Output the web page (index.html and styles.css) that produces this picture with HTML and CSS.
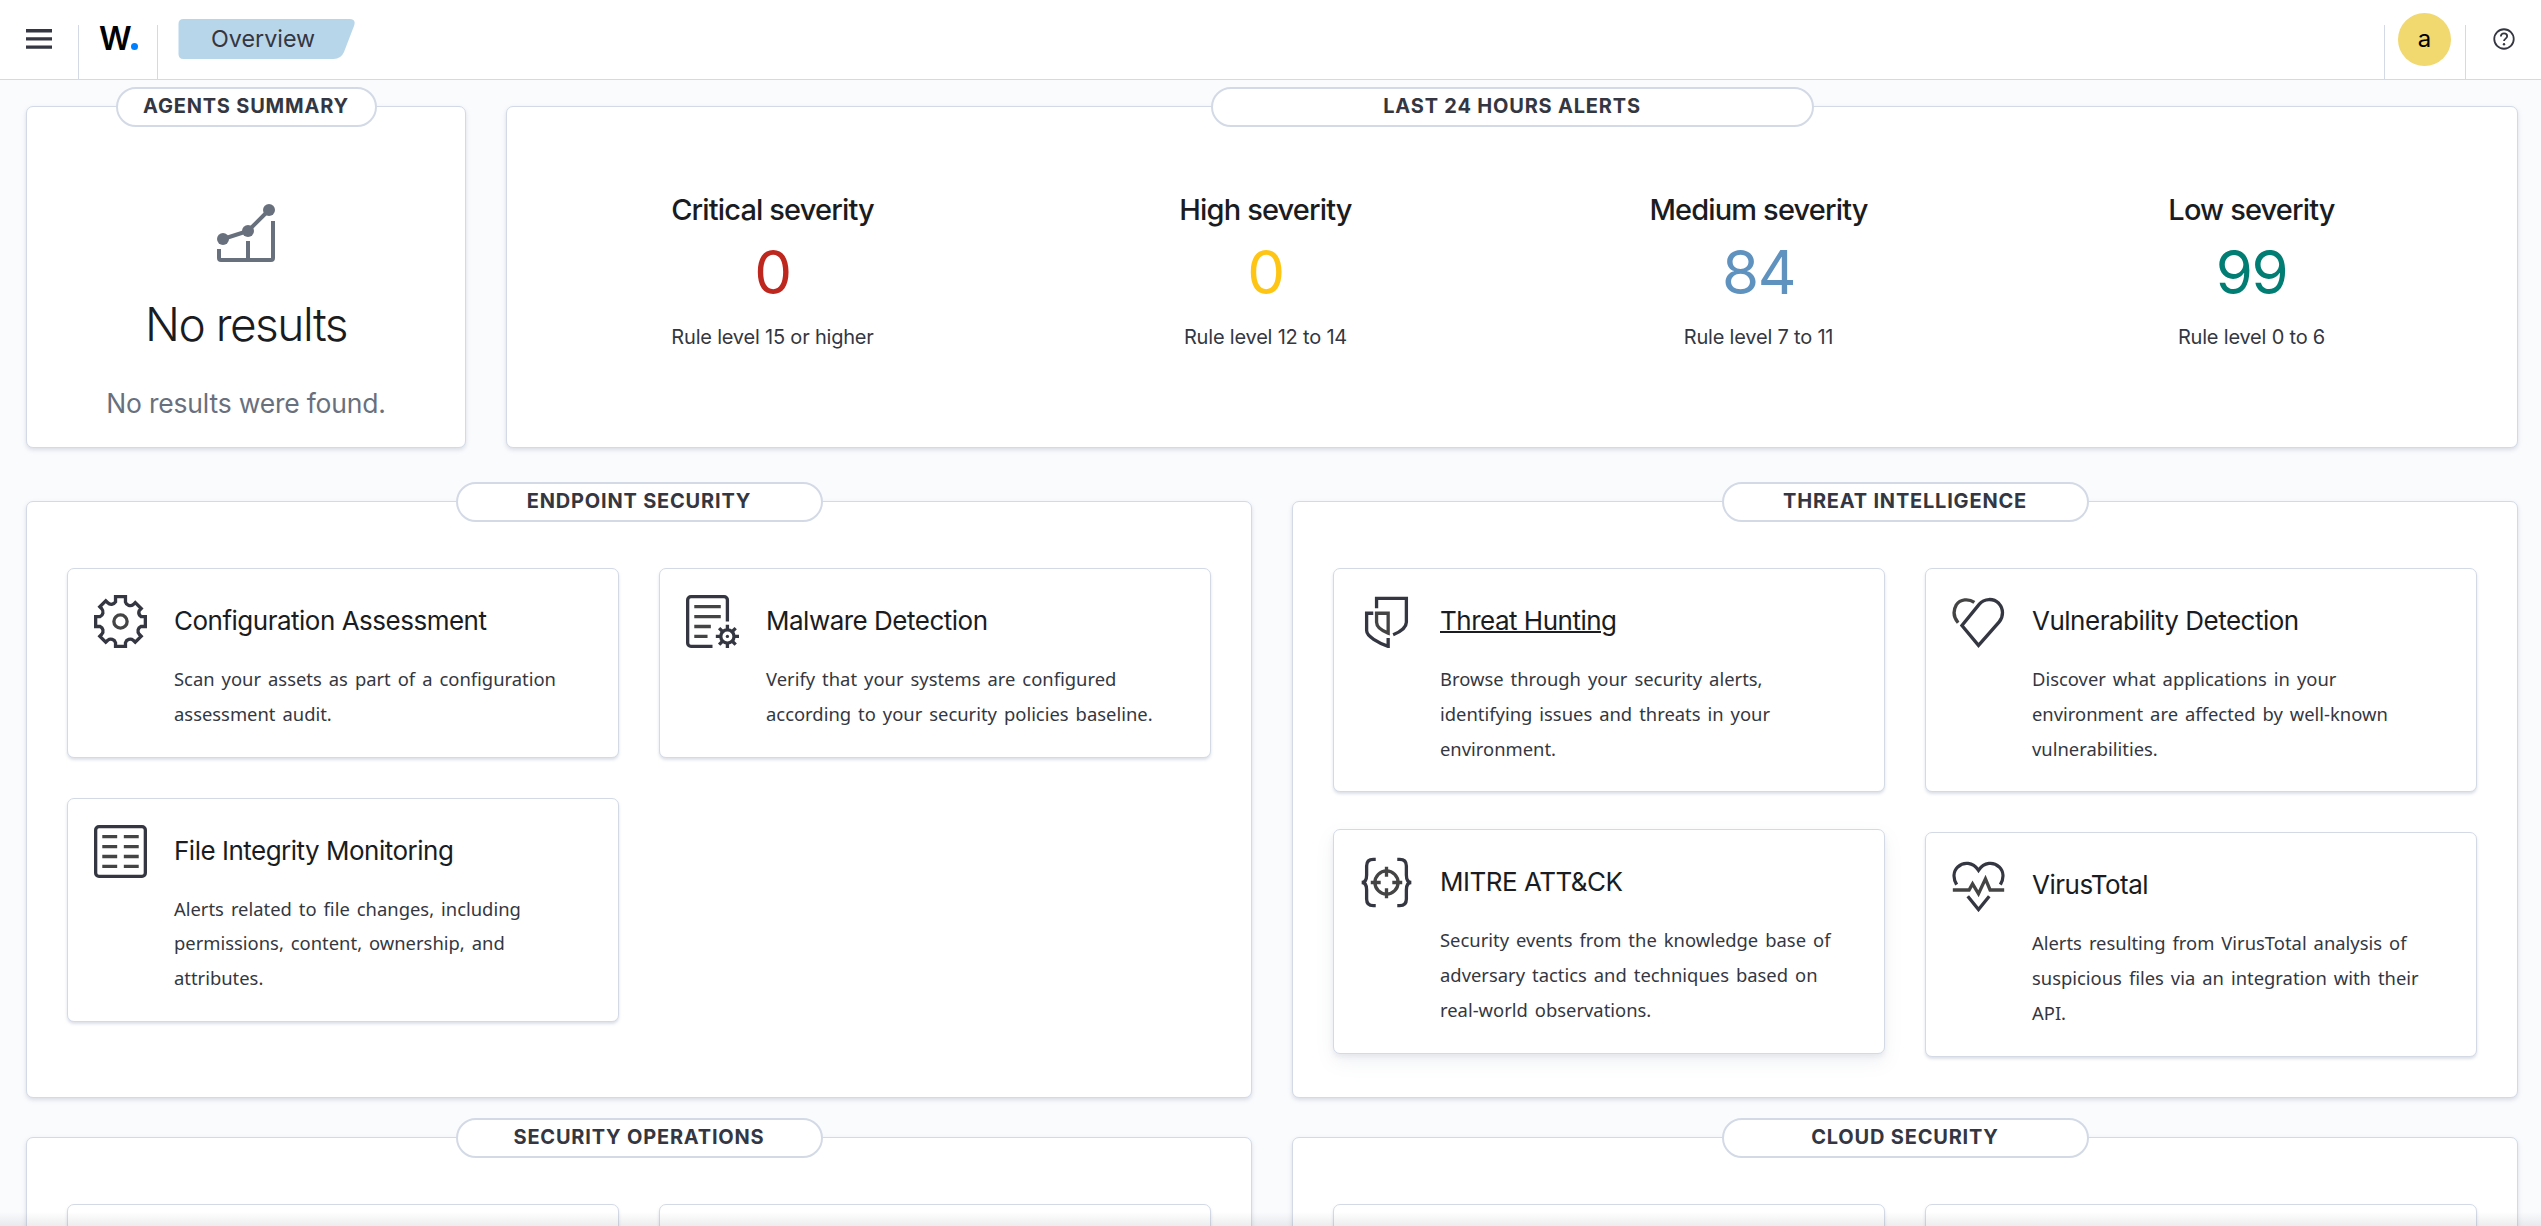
FILE: index.html
```html
<!DOCTYPE html>
<html lang="en">
<head>
    <meta charset="UTF-8">
    <meta name="viewport" content="width=device-width, initial-scale=1.0">
    <title>Wazuh - Overview</title>
    <link rel="stylesheet" href="styles.css">
</head>
<body>
    <header class="header">
        <div class="header-item menu-item">
            <svg class="menu-icon" viewBox="0 0 26 20"><path d="M0 0h26v3.4H0zM0 8.2h26v3.4H0zM0 16.4h26v3.4H0z"/></svg>
        </div>
        <div class="header-item logo-item">
            <span class="logo">W</span><span class="logo-dot"></span>
        </div>
        <nav class="breadcrumb">
            <svg class="breadcrumb-shape" viewBox="0 0 176 40"><path d="M5 0H171Q178 0 175.500 7L165.500 33Q162.500 40 155 40H5Q0 40 0 35V5Q0 0 5 0Z"/></svg>
            <span class="breadcrumb-text">Overview</span>
        </nav>
        <div class="header-right">
            <div class="header-item avatar-item"><span class="avatar">a</span></div>
            <div class="header-item help-item">
                <svg class="help-icon" viewBox="0 0 16 16"><path d="M8 14.500A6.500 6.500 0 1 0 8 1.500a6.500 6.500 0 0 0 0 13Z M5.900 6.300C5.900 5 6.800 4.300 8 4.300s2.100.8 2.100 1.900c0 1.500-2.100 1.600-2.100 3.200"/><circle cx="8" cy="11.500" r=".8"/></svg>
            </div>
        </div>
    </header>

    <main class="page">
        <section class="row row-summary">
            <div class="panel panel-agents">
                <h2 class="pill pill-agents">AGENTS SUMMARY</h2>
                <svg class="chart-icon" viewBox="0 0 58 58"><path class="line" d="M6 35L31 27L52 6M2 45v9q0 2 2 2h50q2 0 2-2V17M31 37v19"/><circle cx="6" cy="35" r="6"/><circle cx="31" cy="27" r="6"/><circle cx="52" cy="6" r="6"/></svg>
                <div class="empty-title">No results</div>
                <div class="empty-text">No results were found.</div>
            </div>
            <div class="panel panel-alerts">
                <h2 class="pill pill-alerts">LAST 24 HOURS ALERTS</h2>
                <div class="stat">
                    <div class="stat-title">Critical severity</div>
                    <div class="stat-value critical">0</div>
                    <div class="stat-text">Rule level 15 or higher</div>
                </div>
                <div class="stat">
                    <div class="stat-title">High severity</div>
                    <div class="stat-value high">0</div>
                    <div class="stat-text">Rule level 12 to 14</div>
                </div>
                <div class="stat">
                    <div class="stat-title">Medium severity</div>
                    <div class="stat-value medium">84</div>
                    <div class="stat-text">Rule level 7 to 11</div>
                </div>
                <div class="stat">
                    <div class="stat-title">Low severity</div>
                    <div class="stat-value low">99</div>
                    <div class="stat-text">Rule level 0 to 6</div>
                </div>
            </div>
        </section>

        <section class="row row-modules">
            <div class="panel panel-modules">
                <h2 class="pill">ENDPOINT SECURITY</h2>
                <div class="cards">
                    <article class="card">
                        <svg class="card-icon" viewBox="0 0 32 32"><path d="M13 1h6v3.200a3 3 0 0 0 4.700 1.600l1.200-1.200 3.600 3.600-1.200 1.200A3 3 0 0 0 28.300 13H31v6h-2.700a3 3 0 0 0-1 4.700l1.200 1.200-3.600 3.600-1.200-1.200A3 3 0 0 0 19 28.800V31h-6v-2.200a3 3 0 0 0-4.700-1.500l-1.200 1.200-3.600-3.600 1.200-1.200a3 3 0 0 0-1-4.700H1v-6h2.700a3 3 0 0 0 1-4.700L3.500 7.100l3.600-3.600 1.200 1.200A3 3 0 0 0 13 4.200Z"/><circle class="accent" cx="16" cy="16" r="4"/></svg>
                        <div>
                            <h3 class="card-title">Configuration Assessment</h3>
                            <p class="card-text">Scan your assets as part of a configuration<br>assessment audit.</p>
                        </div>
                    </article>
                    <article class="card">
                        <svg class="card-icon" viewBox="0 0 32 32"><path d="M16 31H3a2 2 0 0 1-2-2V3a2 2 0 0 1 2-2h20a2 2 0 0 1 2 2v13"/><path class="accent" d="M5 7h16M5 13h16M5 19h10M5 25h8"/><circle cx="25" cy="25" r="4"/><circle class="dot" cx="25" cy="25" r="1"/><path d="M25 18v3M25 29v3M18 25h3M29 25h3M20 20l2.200 2.200M27.800 27.800L30 30M30 20l-2.200 2.200M22.200 27.800L20 30"/></svg>
                        <div>
                            <h3 class="card-title">Malware Detection</h3>
                            <p class="card-text">Verify that your systems are configured<br>according to your security policies baseline.</p>
                        </div>
                    </article>
                    <article class="card">
                        <svg class="card-icon" viewBox="0 0 32 32"><rect x="1" y="1" width="30" height="30" rx="2"/><path class="accent" d="M5 7h9M18 7h9M5 13h9M18 13h9M5 19h9M18 19h9M5 25h9M18 25h9"/></svg>
                        <div>
                            <h3 class="card-title">File Integrity Monitoring</h3>
                            <p class="card-text">Alerts related to file changes, including<br>permissions, content, ownership, and<br>attributes.</p>
                        </div>
                    </article>
                </div>
            </div>
            <div class="panel panel-modules">
                <h2 class="pill">THREAT INTELLIGENCE</h2>
                <div class="cards">
                    <article class="card">
                        <svg class="card-icon" viewBox="0 0 32 32"><path d="M10 8V2h18v14.500c0 2.500-3 5.500-8 7.500M8 11H4v10.500C4 25 11 29 17 31v-5"/><path class="accent" d="M10 11h7v12c-4-1.500-7-4-7-6.500Z"/></svg>
                        <div>
                            <h3 class="card-title hovered">Threat Hunting</h3>
                            <p class="card-text">Browse through your security alerts,<br>identifying issues and threats in your<br>environment.</p>
                        </div>
                    </article>
                    <article class="card">
                        <svg class="card-icon" viewBox="0 0 32 32"><path class="accent" d="M13.500 4.500C10 2 5 2.500 2.600 6 .6 9.500 1 13.500 3.700 16.800"/><path d="M16 30.400L6 18.400 16.500 5.500C19.500 2 25 1.800 28.200 5c3 3.200 3 8 .3 11.200Z"/></svg>
                        <div>
                            <h3 class="card-title">Vulnerability Detection</h3>
                            <p class="card-text">Discover what applications in your<br>environment are affected by well-known<br>vulnerabilities.</p>
                        </div>
                    </article>
                    <article class="card raised">
                        <svg class="card-icon" viewBox="0 0 32 32"><path d="M9.500 2H8Q4 2 4 6v5.500Q4 16 1 16q3 0 3 4.500V26q0 4 4 4h1.500M22.500 2H24q4 0 4 4v5.500q0 4.500 3 4.500-3 0-3 4.500V26q0 4-4 4h-1.500"/><circle class="accent" cx="16" cy="16" r="7"/><path class="accent" d="M16 6.500v6M16 19.500v6M6.500 16h6M19.500 16h6"/></svg>
                        <div>
                            <h3 class="card-title">MITRE ATT&amp;CK</h3>
                            <p class="card-text">Security events from the knowledge base of<br>adversary tactics and techniques based on<br>real-world observations.</p>
                        </div>
                    </article>
                    <article class="card">
                        <svg class="card-icon" viewBox="0 0 32 32"><path d="M2.800 15.500C.5 11.500.8 7.500 3.500 4.800c3.500-3.300 9-3 12.500 2 3.500-5 9-5.300 12.500-2 2.700 2.700 3 6.700.7 10.700M9.500 22.500l6.500 8 6.500-8"/><path class="accent" d="M.5 18.700h9.800l2.100-3.700 3.600 6 4.200-9 2.800 6.700h8.500"/></svg>
                        <div>
                            <h3 class="card-title">VirusTotal</h3>
                            <p class="card-text">Alerts resulting from VirusTotal analysis of<br>suspicious files via an integration with their<br>API.</p>
                        </div>
                    </article>
                </div>
            </div>
        </section>

        <section class="row row-more">
            <div class="panel panel-modules">
                <h2 class="pill">SECURITY OPERATIONS</h2>
                <div class="cards">
                    <article class="card"></article>
                    <article class="card"></article>
                </div>
            </div>
            <div class="panel panel-modules">
                <h2 class="pill">CLOUD SECURITY</h2>
                <div class="cards">
                    <article class="card"></article>
                    <article class="card"></article>
                </div>
            </div>
        </section>
    </main>
    <div class="bottom-shade"></div>
</body>
</html>
```
FILE: styles.css
```css
* {
    box-sizing: border-box;
}
body {
    margin: 0;
    height: 1226px;
    overflow: hidden;
    background: #fafbfd;
    color: #343741;
    font-family: Inter, sans-serif;
}
h2, h3, p {
    margin: 0;
}

/* Header */
.header {
    display: flex;
    height: 80px;
    background: #fff;
    border-bottom: 1px solid #d3dae6;
}
.header-item {
    display: flex;
    height: 79px;
}
.menu-item {
    width: 79px;
    padding: 29px 0 0 26px;
}
.menu-icon {
    width: 26px;
    height: 20px;
    fill: #343741;
}
.logo-item {
    width: 79px;
    padding: 20px 0 0 20px;
}
.menu-item, .logo-item {
    background: linear-gradient(#d3dae6, #d3dae6) right bottom / 1px 54px no-repeat;
}
.logo {
    font: 600 32px/38px Inter, sans-serif;
    color: #000;
    width: 32px;
}
.logo-dot {
    width: 7px;
    height: 7px;
    margin-top: 23px;
    border-radius: 50%;
    background: #0080ff;
}
.breadcrumb {
    display: grid;
    width: 177px;
    height: 40px;
    margin: 19px 0 0 20px;
}
.breadcrumb-shape, .breadcrumb-text {
    grid-area: 1 / 1;
}
.breadcrumb-shape {
    width: 177px;
    height: 40px;
    fill: #b8d6ea;
}
.breadcrumb-text {
    padding-left: 33px;
    font-size: 23.3px;
    line-height: 40px;
}
.header-right {
    display: flex;
    margin-left: auto;
}
.avatar-item {
    width: 82px;
    padding: 13px 0 0 14px;
    background:
        linear-gradient(#d3dae6, #d3dae6) left bottom / 1px 54px no-repeat,
        linear-gradient(#d3dae6, #d3dae6) right bottom / 1px 54px no-repeat;
}
.avatar {
    width: 53px;
    height: 53px;
    border-radius: 50%;
    background: #f1d86f;
    color: #000;
    font-size: 24px;
    font-weight: 400;
    line-height: 52px;
    text-align: center;
}
.help-item {
    width: 75px;
    padding: 27px 0 0 26px;
}
.help-icon {
    width: 24px;
    height: 24px;
    fill: none;
    stroke: #343741;
    stroke-width: 1.2;
}
.help-icon circle {
    fill: #343741;
    stroke: none;
}

/* Panels */
.page {
    display: flex;
    flex-direction: column;
    height: 1146px;
    padding: 26px 23px 0 26px;
    overflow: hidden;
}
.row {
    display: grid;
    flex: none;
    column-gap: 40px;
}
.row-summary {
    grid-template-columns: 440px 1fr;
    height: 342px;
    margin-bottom: 53px;
}
.row-modules, .row-more {
    grid-template-columns: 1fr 1fr;
}
.row-modules {
    height: 597px;
    margin-bottom: 39px;
}
.panel {
    background: #fff;
    border: 1px solid #d3dae6;
    border-radius: 7px;
    box-shadow: 0 2px 4px rgba(120, 130, 160, .25);
}
.pill {
    width: 367px;
    height: 40px;
    margin: -20px auto 0;
    background: #fff;
    border: 2px solid #d3dae6;
    border-radius: 20px;
    font-size: 20px;
    font-weight: 700;
    line-height: 35px;
    letter-spacing: .8px;
    text-align: center;
}
.panel-agents {
    display: flex;
    flex-direction: column;
    align-items: center;
}
.pill-agents {
    width: 261px;
    margin: -20px 0 0;
}
.chart-icon {
    width: 58px;
    height: 58px;
    margin-top: 77px;
    overflow: visible;
    fill: #69707d;
}
.chart-icon .line {
    fill: none;
    stroke: #69707d;
    stroke-width: 4;
}
.empty-title {
    margin-top: 32px;
    color: #1a1c21;
    font-size: 46px;
    font-weight: 300;
    line-height: 60px;
    letter-spacing: -1.5px;
}
.empty-text {
    margin-top: 29px;
    color: #69707d;
    font-size: 26.5px;
    line-height: 40px;
    letter-spacing: -.2px;
}
.panel-alerts {
    display: grid;
    grid-template-columns: repeat(4, 493px);
    grid-template-rows: 20px auto;
    justify-content: center;
}
.pill-alerts {
    grid-column: 1 / -1;
    width: 603px;
}
.stat {
    padding-top: 63px;
    text-align: center;
}
.stat-title {
    color: #1a1c21;
    font-size: 29px;
    font-weight: 500;
    line-height: 40px;
    letter-spacing: -.85px;
}
.stat-value {
    font-size: 60px;
    line-height: 60px;
    letter-spacing: -1.5px;
    margin-top: 12px;
}
.stat-text {
    font-size: 20px;
    line-height: 30px;
    letter-spacing: -.2px;
    margin-top: 20px;
}
.critical {
    color: #bd271e;
}
.high {
    color: #fec514;
}
.medium {
    color: #6092c0;
}
.low {
    color: #017d73;
}

/* Module cards */
.cards {
    display: grid;
    grid-template-columns: 1fr 1fr;
    align-items: start;
    gap: 40px;
    padding: 46px 40px 0;
}
.card {
    display: flex;
    min-height: 189px;
    padding: 26px 26px 25px;
    background: #fff;
    border: 1px solid #d3dae6;
    border-radius: 7px;
    box-shadow: 0 2px 3px rgba(120, 130, 160, .25);
}
.raised {
    margin-top: -3px;
    box-shadow: 0 3px 5px rgba(120, 130, 160, .12), 0 8px 18px rgba(120, 130, 160, .1);
}
.card-icon {
    flex: none;
    width: 53px;
    height: 53px;
    margin-right: 27px;
    fill: none;
    stroke: #343741;
    stroke-width: 2;
}
.card-icon .accent {
    stroke: #444;
}
.card-icon .dot {
    fill: #343741;
    stroke: none;
}
.card-title {
    margin-top: 6px;
    color: #1a1c21;
    font-size: 26px;
    font-weight: 400;
    line-height: 40px;
    letter-spacing: -.5px;
}
.hovered {
    text-decoration: underline;
    text-decoration-thickness: 2px;
}
.card-text {
    margin-top: 21px;
    font-family: "Noto Sans", "Open Sans", sans-serif;
    font-size: 18.4px;
    line-height: 34.8px;
    word-spacing: 2.2px;
    white-space: nowrap;
}
.bottom-shade {
    position: absolute;
    left: 0;
    right: 0;
    top: 1212px;
    height: 14px;
    background: linear-gradient(rgba(100, 105, 115, 0), rgba(100, 105, 115, .12));
}
```
